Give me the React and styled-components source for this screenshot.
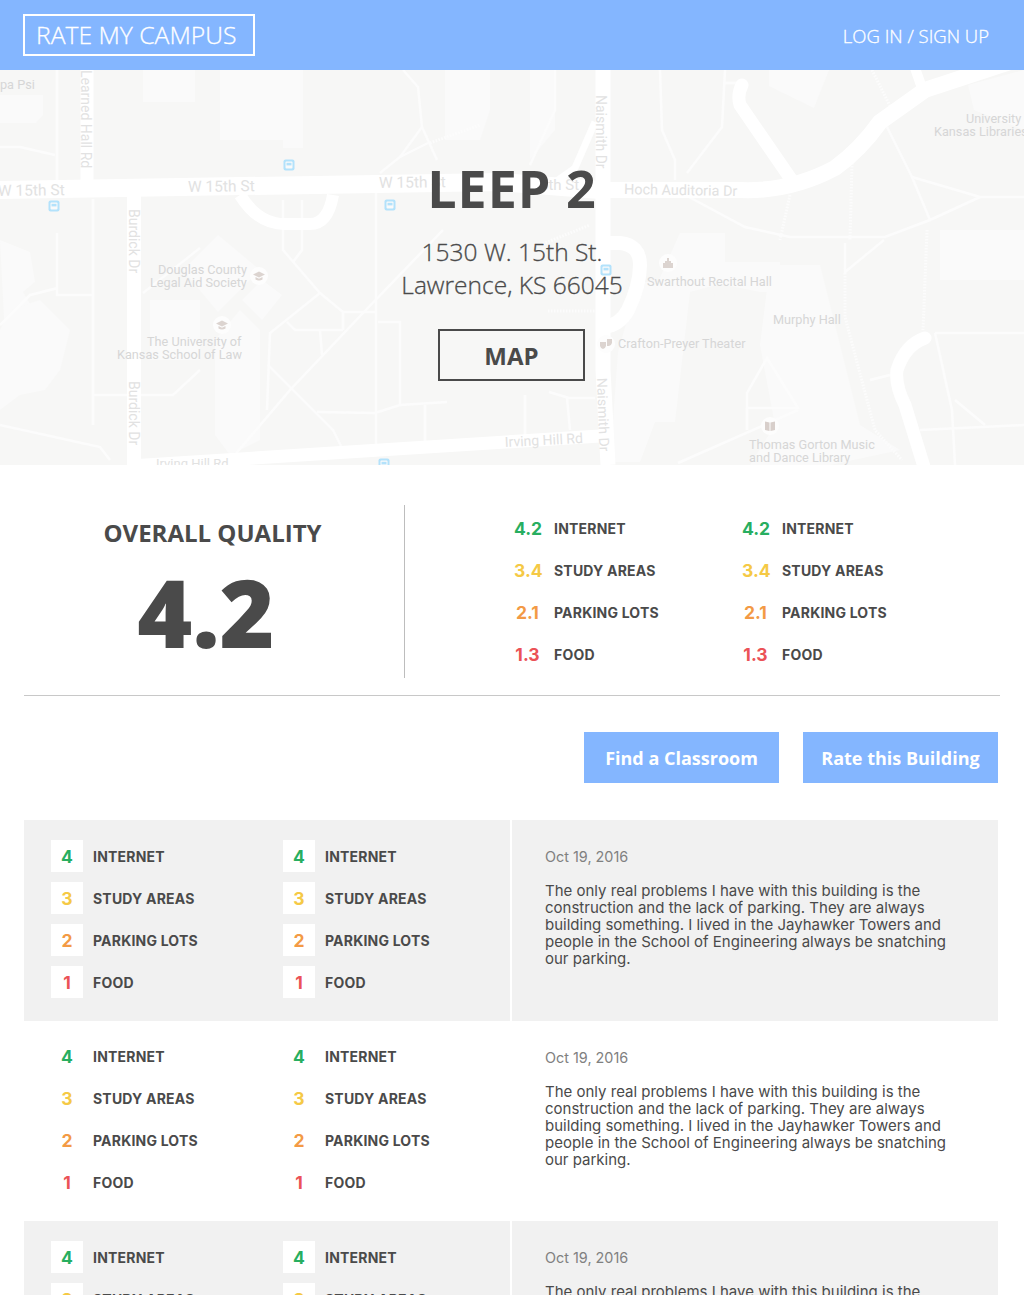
import React from 'react';
import styled, { createGlobalStyle } from 'styled-components';

const SCORES = [
    { value: 4, avg: '4.2', label: 'INTERNET', color: '#27ae60' },
    { value: 3, avg: '3.4', label: 'STUDY AREAS', color: '#f5c945' },
    { value: 2, avg: '2.1', label: 'PARKING LOTS', color: '#f39a45' },
    { value: 1, avg: '1.3', label: 'FOOD', color: '#eb5257' },
];

const REVIEW = 'The only real problems I have with this building is the construction and the lack of parking. They are always building something. I lived in the Jayhawker Towers and people in the School of Engineering always be snatching our parking.';

const BUILDINGS = [
    'M143 70h52v32h-52z', 'M220 70h83v78h-20v-8h-63z', 'M0 95h43v20l-7 8h-36z',
    'M0 240l30 12 5 30-12 10 12 20-30 25z', 'M10 310l30-10 30 30-10 40-15 20-25 5-20 15v-80z',
    'M218 235l42 35-42 42-35-42z', 'M240 310l20 20v110l-30 15-15-20v-95z', 'M262 280l20 15-20 25-20-20z',
    'M680 233h45v29h55v30h-20l-40-8-30 8-15 130h-20l-15 40h-30l8-110 20-70h20z',
    'M770 265h50l15 60 25 100 40 25-70 15h-80l25-40-15-80z',
    'M940 230h84v50h-84z', 'M769 70h60l-15 38-45-22z', 'M968 85l56-15v60l-50-20z',
    'M445 70h45v40l-10 30h-35z', 'M530 70h25v60l-25 30z', 'M150 300h50v60h-50z',
];

const MINOR_ROADS = [
    'M57 70V180', 'M0 147H20L55 155', 'M57 233V295H92', 'M0 325L30 295 58 288',
    'M93 199V425', 'M93 395H173L200 370', 'M0 425L100 447 110 460', 'M143 293L200 248',
    'M283 200V250L320 293 343 312H375', 'M302 200V250L293 262', 'M320 293L270 333 267 410',
    'M287 322L295 330H343', 'M343 312V330', 'M320 330L322 355', 'M233 457L290 390 363 313 443 230',
    'M268 365L333 430 343 450', 'M317 412L375 413 400 405 447 402', 'M376 175V445', 'M378 322H400V405',
    'M425 405V445', 'M403 70L418 87 422 127 437 160', 'M422 127L400 157 380 173', 'M428 143L400 157',
    'M555 70V110L530 165', 'M725 70L722 127 687 173', 'M660 70L662 130 675 160V180', 'M725 83H742',
    'M887 127L912 177 930 220', 'M912 177L980 197H1024', 'M980 197L930 220 885 237H790L745 227 689 197',
    'M845 243V272L884 240', 'M549 392L569 398H595', 'M525 395V435', 'M567 398L570 430',
    'M767 358L747 393V408H798z', 'M747 408V430', 'M798 410L678 463', 'M935 333H1024', 'M935 333L952 410 955 465',
    'M955 400L985 425', 'M920 430L1024 425', 'M870 380L890 375',
];

const DOTTED_ROADS = [
    'M430 143L480 125', 'M872 70L892 110', 'M852 163L850 240', 'M790 195L780 240',
    'M845 273V317L875 430 902 460', 'M927 230L923 330', 'M548 311H595', 'M540 245L590 225',
];

const LABELS = [
    { x: 0, y: 89, text: 'pa Psi' },
    { x: 158, y: 274, text: 'Douglas County' }, { x: 150, y: 287, text: 'Legal Aid Society' },
    { x: 147, y: 346, text: 'The University of' }, { x: 117, y: 359, text: 'Kansas School of Law' },
    { x: 647, y: 286, text: 'Swarthout Recital Hall' }, { x: 773, y: 324, text: 'Murphy Hall' },
    { x: 618, y: 348, text: 'Crafton-Preyer Theater' }, { x: 749, y: 449, text: 'Thomas Gorton Music' },
    { x: 749, y: 462, text: 'and Dance Library' }, { x: 966, y: 123, text: 'University' },
    { x: 934, y: 136, text: 'Kansas Libraries' },
];

const STREETS = [
    { x: -2, y: 196, size: 15.5, angle: -0.8, text: 'W 15th St' }, { x: 188, y: 192, size: 15.5, angle: -0.8, text: 'W 15th St' },
    { x: 379, y: 188, size: 15.5, angle: -0.8, text: 'W 15th St' }, { x: 540, y: 190, size: 15, angle: 0, text: '5th St' },
    { x: 624, y: 194, size: 14.4, angle: 1, text: 'Hoch Auditoria Dr' }, { x: 505, y: 447, size: 14, angle: -3, text: 'Irving Hill Rd' },
    { x: 156, y: 468, size: 13, angle: 0, text: 'Irving Hill Rd' }, { x: 81, y: 70, size: 14, angle: 90, text: 'Learned Hall Rd' },
    { x: 129, y: 209, size: 14, angle: 90, text: 'Burdick Dr' }, { x: 129, y: 381, size: 14, angle: 90, text: 'Burdick Dr' },
    { x: 596, y: 95, size: 14, angle: 90, text: 'Naismith Dr' }, { x: 597, y: 378, size: 14, angle: 88, text: 'Naismith Dr' },
];

const BusStop = ({ x, y }) => (
    <g transform={`translate(${x} ${y})`}>
        <rect x="-5.5" y="-5.5" width="11" height="11" rx="2" fill="#b3e2fb" />
        <rect x="-3.5" y="-3.5" width="7" height="7" rx="1" fill="#fafafa" />
        <rect x="-2.5" y="-2.2" width="5" height="2.6" fill="#b3e2fb" />
    </g>
);

const Poi = ({ x, y, kind }) => (
    <g transform={`translate(${x} ${y})`}>
        <circle r="9" fill="#fdfdfd" />
        {kind === 'school' && <path d="M-6-1.5L0-4.5 6-1.5 0 1.5zM-3.5 1V3.5Q0 5.5 3.5 3.5V1L0 2.7z" fill="#dcd4d0" />}
        {kind === 'castle' && <path d="M-5 5V0H-3V-2H-1V-5H1V-2H3V0H5V5z" fill="#dcd4d0" />}
        {kind === 'theater' && <path d="M-6-2H0V2Q-1 5-3 5T-6 2zM1-5H6V-1Q5 2 3 2H1z" fill="#dcd4d0" />}
        {kind === 'book' && <path d="M-5-4.5L-.5-3.5V5L-5 4zM5-4.5L.5-3.5V5L5 4z" fill="#d8cfcb" />}
    </g>
);

// street map behind the building title, everything in page coordinates
const CampusMap = () => (
    <MapSvg viewBox="0 70 1024 395" preserveAspectRatio="none">
        <rect x="0" y="70" width="1024" height="395" fill="#f7f7f6" />
        {BUILDINGS.map((d, i) => <path key={i} d={d} fill="#fafafa" />)}
        <g fill="none" stroke="#fcfcfc" strokeWidth="2.5">
            {MINOR_ROADS.map((d, i) => <path key={i} d={d} />)}
        </g>
        <g fill="none" stroke="#fcfcfc" strokeWidth="3" strokeDasharray="1.5 1.5">
            {DOTTED_ROADS.map((d, i) => <path key={i} d={d} />)}
        </g>
        <g fill="none" stroke="#fff" strokeLinecap="butt">
            <path d="M-5 190L500 182 600 190" strokeWidth="18" />
            <path d="M600 190H740Q790 192 835 168 860 150 880 122L925 90 1010 62" strokeWidth="16" />
            <path d="M915 68L922 88" strokeWidth="10" />
            <path d="M603 70V370L608 465" strokeWidth="15" />
            <path d="M87 70V185" strokeWidth="13" />
            <path d="M134 195V465" strokeWidth="14" />
            <path d="M130 466L600 436" strokeWidth="13" />
            <path d="M240 195Q258 224 285 224H310Q328 224 333 195" strokeWidth="12" />
            <path d="M604 243H620Q640 245 640 265T628 310Q620 325 604 327" strokeWidth="14" />
            <path d="M742 85Q737 95 740 105L795 185" strokeWidth="13" strokeLinecap="round" />
            <path d="M925 338Q905 345 897 370 895 385 905 405L925 470" strokeWidth="13" strokeLinecap="round" />
            <path d="M555 182L575 168 595 122" strokeWidth="7" />
        </g>
        <g fontFamily="Roboto, sans-serif" fill="#d6d6d6" fontSize="12.7">
            {LABELS.map((l, i) => <text key={i} x={l.x} y={l.y}>{l.text}</text>)}
        </g>
        <g fontFamily="Roboto, sans-serif" fill="#e2e2e2">
            {STREETS.map((s, i) => (
                <text key={i} x={s.x} y={s.y} fontSize={s.size} transform={`rotate(${s.angle} ${s.x} ${s.y})`}>{s.text}</text>
            ))}
        </g>
        <BusStop x={289} y={165} />
        <BusStop x={54} y={206} />
        <BusStop x={390} y={205} />
        <BusStop x={606} y={270} />
        <BusStop x={384} y={464} />
        <Poi x={259} y={276} kind="school" />
        <Poi x={222} y={325} kind="school" />
        <Poi x={668} y={263} kind="castle" />
        <Poi x={606} y={344} kind="theater" />
        <Poi x={770} y={426} kind="book" />
    </MapSvg>
);

const RatingColumn = ({ shaded }) => (
    <RatingList>
        {SCORES.map(s => (
            <RatingRow key={s.label}>
                <RatingBadge $color={s.color} $shaded={shaded}>{s.value}</RatingBadge>
                <RatingLabel>{s.label}</RatingLabel>
            </RatingRow>
        ))}
    </RatingList>
);

const ReviewCard = ({ shaded }) => (
    <Review>
        <ReviewRatings $shaded={shaded}>
            <RatingColumn shaded={shaded} />
            <RatingColumn shaded={shaded} />
        </ReviewRatings>
        <ReviewBody $shaded={shaded}>
            <ReviewDate>Oct 19, 2016</ReviewDate>
            <ReviewText>{REVIEW}</ReviewText>
        </ReviewBody>
    </Review>
);

const App = () => (
    <Page>
        <GlobalStyle />
        <Header>
            <Logo>RATE MY CAMPUS</Logo>
            <Login>LOG IN / SIGN UP</Login>
        </Header>
        <Hero>
            <CampusMap />
            <Title>LEEP 2</Title>
            <Address>1530 W. 15th St.<br />Lawrence, KS 66045</Address>
            <MapButton>MAP</MapButton>
        </Hero>
        <Summary>
            <Overall>
                <OverallTitle>OVERALL QUALITY</OverallTitle>
                <OverallScore>4.2</OverallScore>
            </Overall>
            <Averages>
                {[0, 1].map(col => (
                    <RatingList key={col}>
                        {SCORES.map(s => (
                            <AverageRow key={s.label}>
                                <AverageScore $color={s.color}>{s.avg}</AverageScore>
                                <RatingLabel>{s.label}</RatingLabel>
                            </AverageRow>
                        ))}
                    </RatingList>
                ))}
            </Averages>
        </Summary>
        <Actions>
            <ActionButton>Find a Classroom</ActionButton>
            <ActionButton>Rate this Building</ActionButton>
        </Actions>
        <Reviews>
            <ReviewCard shaded />
            <ReviewCard />
            <ReviewCard shaded />
        </Reviews>
    </Page>
);

export default App;

const GlobalStyle = createGlobalStyle`
    body {
        background: #fff;
        color: #4a4a4a;
        font-family: "Open Sans", sans-serif;
        margin: 0;
    }
`;

const Page = styled.div`
    height: 1295px;
    overflow: hidden;
`;

const Header = styled.header`
    align-items: center;
    background: #84b6ff;
    box-sizing: border-box;
    color: #fff;
    display: flex;
    height: 70px;
    justify-content: space-between;
    padding: 0 35px 0 23px;
`;

const Logo = styled.div`
    border: 2px solid #fff;
    box-sizing: border-box;
    font-size: 24.7px;
    font-weight: 300;
    -webkit-text-stroke: 0.3px #fff;
    height: 42px;
    line-height: 38px;
    padding-left: 11px;
    white-space: nowrap;
    width: 232px;
`;

const Login = styled.a`
    font-size: 18.5px;
    font-weight: 300;
    -webkit-text-stroke: 0.3px #fff;
`;

const Hero = styled.section`
    align-items: center;
    display: flex;
    flex-direction: column;
    height: 395px;
    overflow: hidden;
    position: relative;
`;

const MapSvg = styled.svg`
    height: 100%;
    left: 0;
    position: absolute;
    top: 0;
    width: 100%;
`;

const Title = styled.h1`
    font-size: 52px;
    font-weight: 700;
    letter-spacing: 1px;
    line-height: 64px;
    margin: 86px 0 0;
    position: relative;
`;

const Address = styled.p`
    font-size: 24.5px;
    font-weight: 300;
    -webkit-text-stroke: 0.3px #4a4a4a;
    line-height: 33px;
    margin: 15px 0 0;
    position: relative;
    text-align: center;
`;

const MapButton = styled.button`
    background: transparent;
    border: 2px solid #4a4a4a;
    box-sizing: border-box;
    color: #4a4a4a;
    font-family: inherit;
    font-size: 24px;
    font-weight: 700;
    height: 52px;
    margin: 28px 1px 0 0;
    padding: 0;
    position: relative;
    width: 147px;
`;

const Summary = styled.section`
    border-bottom: 1px solid #c8c8c8;
    box-sizing: border-box;
    display: flex;
    height: 191px;
    margin: 40px 24px 0;
    padding-bottom: 17px;
`;

const Overall = styled.div`
    border-right: 1px solid #bdbdbd;
    box-sizing: border-box;
    padding-top: 11px;
    text-align: center;
    width: 381px;
`;

const OverallTitle = styled.h2`
    font-size: 24px;
    font-weight: 700;
    line-height: 33px;
    margin: 0 0 0 -3px;
`;

const OverallScore = styled.div`
    font-size: 94px;
    font-weight: 800;
    line-height: 100px;
    margin: 13px 0 0 -16px;
`;

const Averages = styled.div`
    display: grid;
    grid-template-columns: 228px 228px;
    padding: 2px 0 0 109px;
`;

const RatingList = styled.div`
    display: flex;
    flex-direction: column;
`;

const RatingRow = styled.div`
    align-items: center;
    display: flex;
    gap: 10px;
    height: 42px;
`;

const AverageRow = styled(RatingRow)`
    gap: 12px;
`;

const AverageScore = styled.span`
    color: ${props => props.$color};
    font-family: Inter, sans-serif;
    font-size: 17.5px;
    font-weight: 700;
    text-align: center;
    width: 27px;
    margin-right: 1px;
`;

const RatingBadge = styled.span`
    align-items: center;
    background: ${props => props.$shaded ? '#fff' : 'transparent'};
    color: ${props => props.$color};
    display: flex;
    font-family: Inter, sans-serif;
    font-size: 17.5px;
    font-weight: 700;
    height: 32px;
    justify-content: center;
    width: 32px;
`;

const RatingLabel = styled.span`
    font-family: Inter, sans-serif;
    font-size: 14px;
    font-weight: 700;
    letter-spacing: 0.2px;
`;

const Actions = styled.div`
    display: flex;
    gap: 24px;
    justify-content: flex-end;
    margin: 36px 26px 0 0;
`;

const ActionButton = styled.button`
    background: #84b6ff;
    border: none;
    color: #fff;
    font-family: inherit;
    font-size: 18px;
    font-weight: 700;
    height: 51px;
    padding: 0;
    width: 195px;
`;

const Reviews = styled.div`
    margin: 37px 26px 0 24px;
`;

const Review = styled.article`
    display: flex;
    gap: 2px;
    height: 200.5px;
`;

const ReviewRatings = styled.div`
    background: ${props => props.$shaded ? '#f1f1f1' : 'transparent'};
    box-sizing: border-box;
    display: grid;
    grid-template-columns: 232px 232px;
    padding: 15px 0 0 27px;
    width: 486px;
`;

const ReviewBody = styled.div`
    background: ${props => props.$shaded ? '#f1f1f1' : 'transparent'};
    box-sizing: border-box;
    padding: 28px 0 0 33px;
    width: 486px;
`;

const ReviewDate = styled.div`
    color: #808080;
    font-family: Inter, sans-serif;
    font-size: 14.4px;
    line-height: 17px;
`;

const ReviewText = styled.p`
    font-family: Inter, sans-serif;
    font-size: 15px;
    line-height: 17px;
    margin: 17px 0 0;
    width: 405px;
`;
